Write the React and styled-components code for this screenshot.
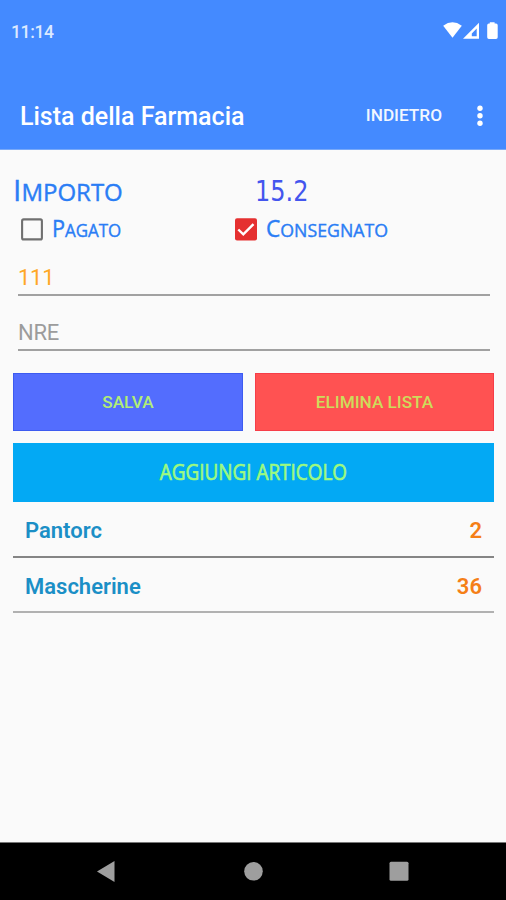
import React from 'react';
import styled, { createGlobalStyle } from 'styled-components';

const GlobalStyle = createGlobalStyle`
    * {
        box-sizing: border-box;
    }
    body {
        margin: 0;
        background-color: #fafafa;
        font-family: Roboto, 'Liberation Sans', sans-serif;
    }
`

const Screen = styled.div`
    width: 506px;
    height: 900px;
    display: flex;
    flex-direction: column;
    overflow: hidden;
    background-color: #fafafa;
`

const Header = styled.header`
    height: 150px;
    flex-shrink: 0;
    background-color: #448aff;
    color: #fff;
    border-bottom: 1px solid #79a9f8;
`

const StatusBar = styled.div`
    height: 62px;
    display: flex;
    align-items: center;
    justify-content: space-between;
    padding: 0 8px 0 11px;
`

const Clock = styled.span`
    padding-top: 1px;
    font-size: 17.5px;
    font-weight: 500;
    letter-spacing: -0.35px;
    color: #dce9ff;
`

const AppBar = styled.div`
    height: 87px;
    display: flex;
    align-items: center;
    padding: 20px 23px 0 20px;
`

const Title = styled.h1`
    flex: 1;
    margin: 0;
    padding-top: 2px;
    font-size: 25px;
    line-height: 30px;
    font-weight: 500;
`

const Action = styled.button`
    border: none;
    padding: 0;
    margin: -1px 35px 0 0;
    background: none;
    color: #f2f7ff;
    font-family: inherit;
    font-size: 17.2px;
    font-weight: 500;
`

const Content = styled.main`
    flex: 1;
    padding: 24px 12px 0 13px;
`

const SmallCaps = styled.span`
    display: inline-block;
    color: #2a7df5;
    font-family: 'Open Sans', sans-serif;
    font-size: ${props => props.$size}px;
    line-height: 32px;
    text-transform: uppercase;
    transform-origin: left center;
    transform: scaleX(${props => props.$stretch || 1});
    -webkit-text-stroke: 0.4px #2a7df5;

    &::first-letter {
        font-size: ${props => props.$first}px;
    }
`

const Columns = styled.div`
    height: ${props => props.$height}px;
    display: grid;
    grid-template-columns: ${props => props.$columns};
    align-items: center;
`

const Amount = styled.span`
    color: #4355ee;
    font-family: 'DejaVu Sans Condensed', 'DejaVu Sans', sans-serif;
    font-stretch: condensed;
    font-size: 29px;
    line-height: 34px;
    transform-origin: left center;
    transform: scaleX(0.92);
`

const Check = styled.label`
    display: flex;
    align-items: center;
    gap: 9px;
    padding-left: 8px;
`

const Field = styled.input`
    display: block;
    width: 472px;
    height: ${props => props.$height}px;
    margin: 0 0 0 5px;
    padding: ${props => props.$top}px 0 0;
    border: none;
    border-bottom: 2px solid #a1a1a1;
    border-radius: 0;
    outline: none;
    background: none;
    color: #ffa726;
    font-family: inherit;
    font-size: 22px;
    letter-spacing: -0.3px;

    &::placeholder {
        color: #9c9c9c;
        opacity: 1;
    }
`

const Buttons = styled.div`
    display: grid;
    grid-template-columns: 230px 239px;
    gap: 12px;
    margin-top: 22px;
`

const Button = styled.button`
    height: 58px;
    padding: 0;
    border: 1px solid ${props => props.$edge};
    background-color: ${props => props.$bg};
    color: ${props => props.$color};
    font-family: inherit;
    font-size: 17.2px;
    font-weight: 500;
`

const AddButton = styled(Button)`
    width: 100%;
    height: 59px;
    margin-top: 12px;
    padding-bottom: 2px;
    font-family: 'Open Sans', sans-serif;
    font-size: 22.5px;
    -webkit-text-stroke: 0.7px ${props => props.$color};
`

const Squeeze = styled.span`
    display: inline-block;
    white-space: nowrap;
    transform: scaleX(${props => props.$by});
`

const List = styled.ul`
    margin: 0;
    padding: 0;
    list-style: none;
`

const Item = styled.li`
    height: ${props => props.$height}px;
    display: flex;
    align-items: center;
    justify-content: space-between;
    padding: 3px 12px 0;
    border-bottom: ${props => props.$line};
    color: #1b8fc6;
    font-size: 22px;
    font-weight: 600;
`

const Quantity = styled.span`
    color: #f57f17;
`

const NavBar = styled.nav`
    height: 58px;
    flex-shrink: 0;
    display: flex;
    justify-content: space-between;
    padding: 17px 95px 0 93px;
    border-top: 1px solid #777;
    background-color: #000;
`

function StatusIcons() {
  return (
    <svg width="56" height="20" viewBox="442 21 56 20" fill="#fff">
        <path d="M443.2 25.7Q452.5 18.8 461.8 25.7L452.5 37.8Z" />
        <path fillRule="evenodd" d="M463 38.8L479 22.8V38.8ZM471.8 36.2H476.7V28.5L471.8 33.4Z" />
        <path d="M489.8 22.2H494.6V23.6H496Q497.7 23.6 497.7 25.3V37.3Q497.7 39 496 39H488.9Q487.2 39 487.2 37.3V25.3Q487.2 23.6 488.9 23.6H489.8Z" />
    </svg>
  )
}

function Box({ checked }) {
  return (
    <svg width="22" height="23" viewBox="0 0 22 23">
        {checked ? (
            <>
                <rect x="0" y="0.3" width="22" height="22.2" rx="2" fill="#e53030" />
                <path d="M3.3 11.5L8.3 16.4L18.5 6.1" fill="none" stroke="#fff" strokeWidth="2.4" />
            </>
        ) : (
            <rect x="1.1" y="1.4" width="19.8" height="20" rx="1.5" fill="none" stroke="#707070" strokeWidth="2.1" />
        )}
    </svg>
  )
}

export default function App() {
  return (
    <Screen>
        <GlobalStyle />
        <Header>
            <StatusBar>
                <Clock>11:14</Clock>
                <StatusIcons />
            </StatusBar>
            <AppBar>
                <Title>Lista della Farmacia</Title>
                <Action>INDIETRO</Action>
                <svg width="6" height="22" viewBox="0 0 6 22" fill="#fff">
                    <circle cx="3" cy="3.3" r="2.7" />
                    <circle cx="3" cy="10.8" r="2.7" />
                    <circle cx="3" cy="18.3" r="2.7" />
                </svg>
            </AppBar>
        </Header>

        <Content>
            <Columns $height={34} $columns="242px 1fr">
                <SmallCaps $size={24} $first={30}>Importo</SmallCaps>
                <Amount>15.2</Amount>
            </Columns>
            <Columns $height={42} $columns="214px 1fr">
                <Check>
                    <Box />
                    <SmallCaps $size={18} $first={23} $stretch={0.94}>Pagato</SmallCaps>
                </Check>
                <Check>
                    <Box checked />
                    <SmallCaps $size={18} $first={23} $stretch={0.985}>Consegnato</SmallCaps>
                </Check>
            </Columns>
            <Field $height={46} $top={10} defaultValue="111" />
            <Field $height={55} $top={20} placeholder="NRE" />
            <Buttons>
                <Button $bg="#536dfe" $edge="#3d5bf0" $color="#b2ee75">SALVA</Button>
                <Button $bg="#ff5252" $edge="#f63d48" $color="#cddc5b">ELIMINA LISTA</Button>
            </Buttons>
            <AddButton $bg="#03a9f4" $edge="#03a9f4" $color="#9dfa80">
                <Squeeze $by={0.84}>AGGIUNGI ARTICOLO</Squeeze>
            </AddButton>
            <List>
                <Item $height={56} $line="2px solid #858585">
                    Pantorc <Quantity>2</Quantity>
                </Item>
                <Item $height={55} $line="2px solid #b1b1b1">
                    Mascherine <Quantity>36</Quantity>
                </Item>
            </List>
        </Content>

        <NavBar>
            <svg width="24" height="24" viewBox="0 0 24 24" fill="#9e9e9e">
                <path d="M4 11.5L21.5 1V22Z" />
            </svg>
            <svg width="24" height="24" viewBox="0 0 24 24" fill="#9e9e9e">
                <circle cx="13.5" cy="11.3" r="9.3" />
            </svg>
            <svg width="24" height="24" viewBox="0 0 24 24" fill="#9e9e9e">
                <rect x="2.5" y="1.7" width="19" height="19" rx="1.5" />
            </svg>
        </NavBar>
    </Screen>
  )
}
